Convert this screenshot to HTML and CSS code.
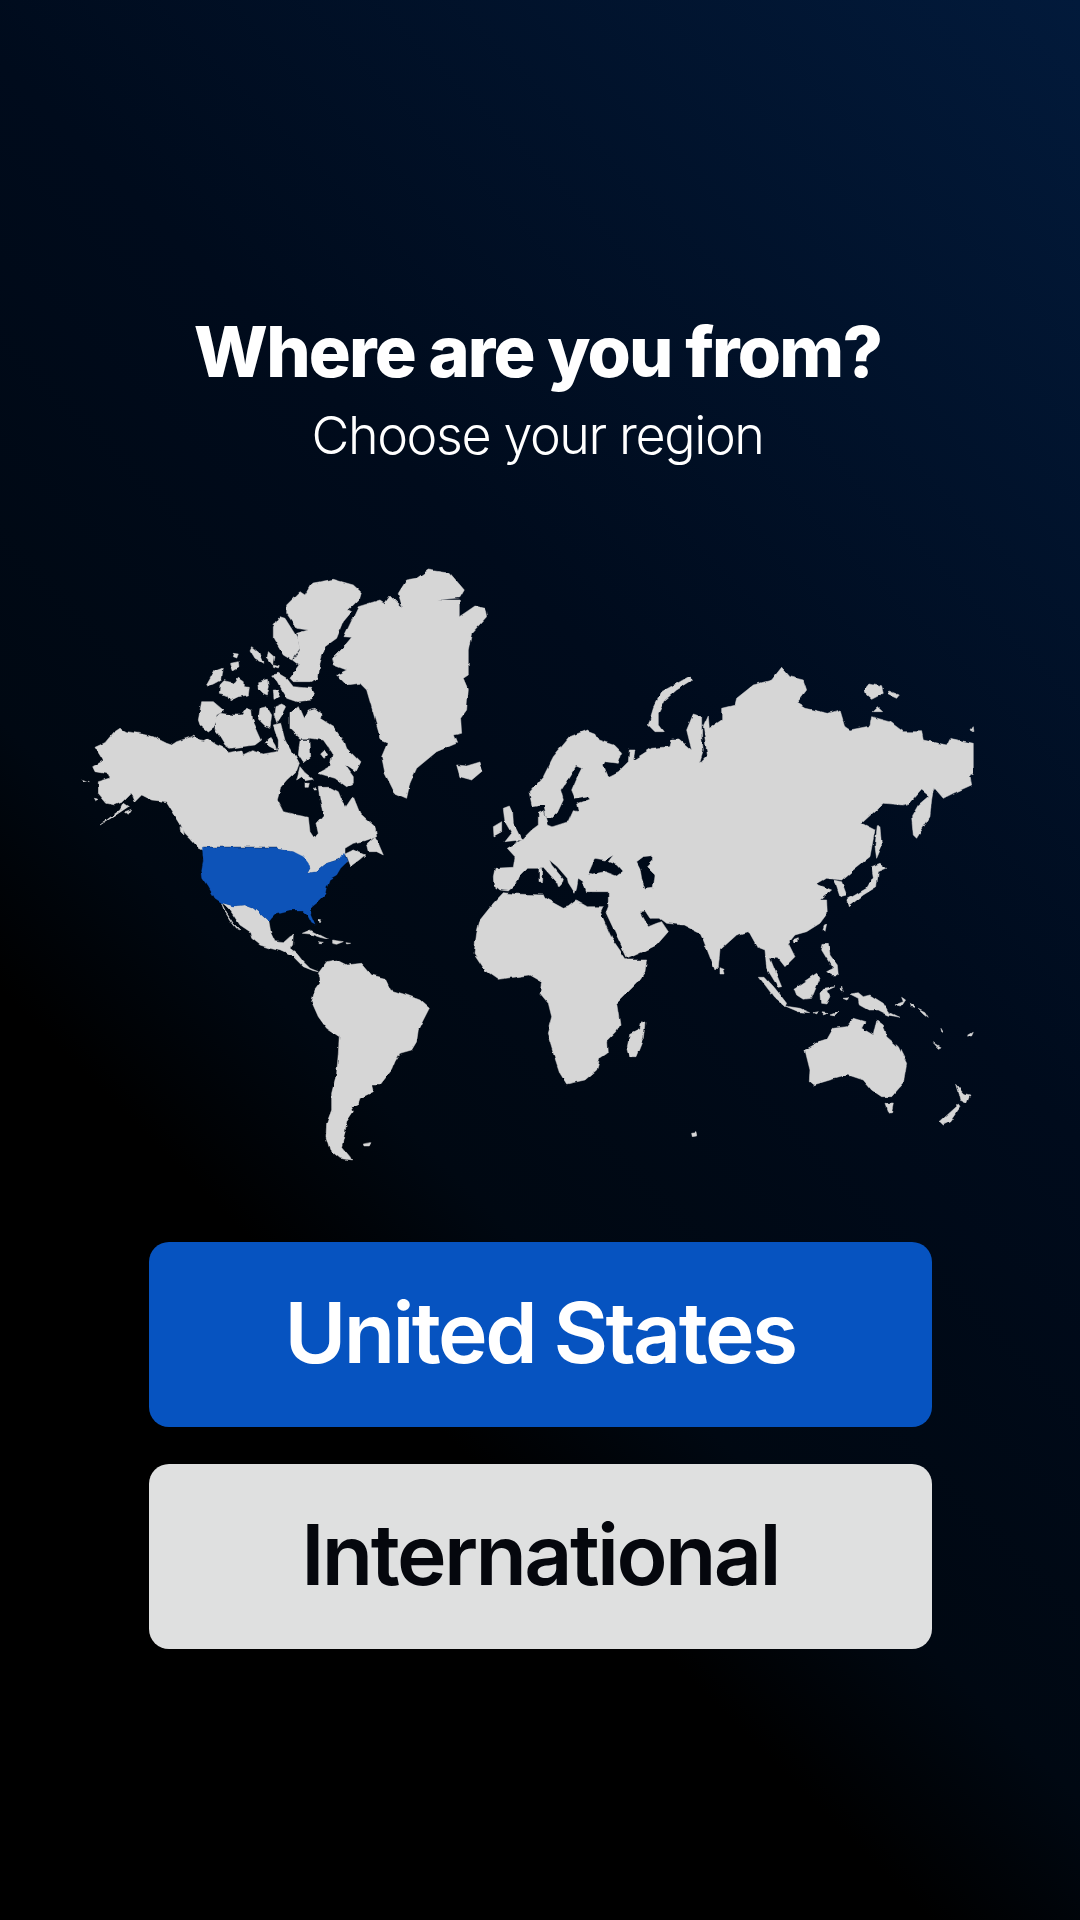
FILE: index.html
```html
<!DOCTYPE html>
<html lang="en">
<head>
    <meta charset="UTF-8">
    <meta name="viewport" content="width=device-width, initial-scale=1.0">
    <title>Where are you from?</title>
    <link rel="stylesheet" href="styles.css">
</head>
<body>
    <div class="screen">
        <div class="heading">
            <h1 class="title">Where are you from?</h1>
            <p class="subtitle">Choose your region</p>
        </div>

        <svg class="map" viewBox="0 550 1080 620" xmlns="http://www.w3.org/2000/svg">
            <defs>
                <!-- roughens the hand traced coastlines a little -->
                <filter id="coast" x="0" y="550" width="1080" height="620" filterUnits="userSpaceOnUse" primitiveUnits="userSpaceOnUse">
                    <feTurbulence type="fractalNoise" baseFrequency="0.11" numOctaves="2" seed="4"/>
                    <feDisplacementMap in="SourceGraphic" scale="3.5" xChannelSelector="R" yChannelSelector="G"/>
                    <feGaussianBlur stdDeviation="0.35"/>
                </filter>
            </defs>
            <g filter="url(#coast)">
            <!-- north america + arctic -->
            <g class="land" transform="translate(70 550) scale(.3333)">
                <polygon points="75,592 105,578 130,548 150,535 170,545 205,550 250,560 290,580 305,585 320,575 365,560 372,555 385,572 400,575 415,568 440,585 470,597 475,608 515,600 520,614 545,602 580,612 620,605 625,592 650,600 675,615 688,640 680,662 650,690 632,712 622,750 640,785 680,795 715,802 720,845 733,865 745,850 738,820 760,795 750,745 745,712 780,712 805,725 815,750 828,770 845,745 850,740 870,790 915,830 920,860 895,870 850,880 825,895 825,912 815,925 770,940 740,965 712,970 720,955 700,925 670,905 625,898 620,890 397,890 410,905 395,890 365,870 345,850 330,820 290,755 245,750 215,735 195,755 185,730 160,755 135,765 110,760 85,730 85,695 120,685 115,672 75,665 68,650 100,632"/>
                <polygon points="160,760 150,780 90,825 130,800 175,770"/>
                <polygon points="36,688 58,695 40,693"/>
                <polygon points="70,742 84,745 75,750"/>
                <polygon points="165,785 185,778 175,793"/>
                <polygon points="365,870 395,885 408,905 385,893"/>
                <polygon points="330,830 340,835 342,855 332,845"/>
                <polygon points="680,690 690,650 705,668 730,688 705,692 695,680"/>
                <polygon points="705,700 718,700 715,712 705,712"/>
                <polygon points="735,712 740,720 730,720"/>
                <polygon points="890,885 915,862 925,880 940,915 920,905 895,905"/>
                <polygon points="825,912 850,900 885,915 870,928 840,950 832,930"/>
                <!-- arctic islands -->
                <polygon points="650,165 690,125 705,135 725,100 790,88 850,105 872,125 865,150 835,180 845,185 820,215 800,265 765,290 750,340 745,385 720,395 670,395 660,385 690,345 670,330 690,300 680,250 715,240 680,235 650,190"/>
                <polygon points="610,230 630,200 645,205 680,260 690,295 665,330 640,315 625,290 610,265"/>
                <polygon points="545,290 570,310 582,340 555,325 540,300"/>
                <polygon points="595,305 612,320 608,345 592,325"/>
                <polygon points="610,345 628,350 625,357 610,352"/>
                <polygon points="490,310 505,312 500,325 487,320"/>
                <polygon points="482,340 505,335 507,350 490,360"/>
                <polygon points="410,405 435,360 457,352 452,390 430,402 415,408"/>
                <polygon points="450,405 462,392 495,400 505,385 520,395 520,410 538,412 535,435 505,440 480,452 470,435 448,430"/>
                <polygon points="563,395 595,388 598,410 592,435 580,430 565,415"/>
                <polygon points="610,420 622,420 632,440 612,448"/>
                <polygon points="605,375 625,370 650,385 670,410 725,415 735,435 725,450 680,455 650,445 635,420 622,395"/>
                <polygon points="395,455 430,455 462,482 440,495 430,530 412,543 390,525 385,510"/>
                <polygon points="435,505 450,490 490,495 515,495 530,475 545,480 548,510 575,570 555,585 515,590 480,595 465,585 450,560 435,540"/>
                <polygon points="570,475 590,470 605,495 600,535 585,530 565,510"/>
                <polygon points="615,470 635,462 650,470 640,490 620,520 612,495"/>
                <polygon points="625,615 625,570 610,525 632,520 645,570 670,615"/>
                <polygon points="585,580 600,562 615,585 620,600 600,590"/>
                <polygon points="660,490 685,470 700,505 715,480 735,475 760,495 750,505 790,530 825,580 830,595 870,635 855,665 825,645 850,680 850,700 830,710 795,685 745,670 780,650 788,610 760,570 725,565 690,565 660,535"/>
                <polygon points="690,570 720,570 722,620 700,638 685,615"/>
                <polygon points="752,612 765,600 773,615 762,625"/>
                <!-- greenland, iceland -->
                <polygon points="785,325 830,280 845,262 822,260 865,170 930,150 945,160 960,138 998,175 985,130 1010,90 1040,85 1075,60 1140,70 1183,120 1170,143 1103,150 1168,150 1168,200 1215,168 1245,175 1250,200 1205,250 1195,300 1195,375 1180,385 1195,420 1190,480 1172,505 1175,550 1150,555 1160,580 1100,605 1040,655 1020,700 1010,745 975,730 945,670 935,620 952,580 930,570 925,540 890,420 870,400 830,405 800,375 830,360 790,345"/>
                <polygon points="1160,645 1190,648 1230,636 1238,662 1205,690 1170,680"/>
            </g>

            <!-- mexico, caribbean, south america -->
            <g class="land" transform="translate(70 820) scale(.3333)">
                <polygon points="455,248 490,258 525,255 550,265 575,285 597,305 603,340 615,365 640,368 660,350 670,345 668,375 660,385 680,400 700,425 720,445 745,455 730,452 700,440 670,410 630,392 600,385 570,375 545,355 540,335 510,315 480,270 465,255"/>
                <polygon points="455,250 470,280 490,310 510,330 500,325 480,300 462,270"/>
                <polygon points="697,340 720,330 750,345 775,358 750,352 720,342"/>
                <polygon points="785,360 820,365 800,373 785,370"/>
                <polygon points="745,368 760,370 750,372"/>
                <polygon points="828,368 842,370 830,372"/>
                <polygon points="745,300 755,302 750,312"/>
                <polygon points="745,460 770,425 800,420 830,435 875,430 905,465 945,475 962,510 1010,525 1050,540 1078,565 1060,600 1045,630 1040,665 1025,690 990,700 975,725 965,750 930,795 905,795 910,815 870,835 865,850 845,860 850,875 830,905 825,935 815,980 840,1010 845,1020 810,1015 780,990 768,950 770,910 785,870 785,820 800,760 805,700 808,650 770,625 745,590 725,545 735,510 750,490 750,470"/>
                <polygon points="880,972 903,968 898,978 882,978"/>
            </g>

            <!-- eurasia -->
            <g class="land" transform="translate(470 650) scale(.3333)">
                <path fill-rule="evenodd" d="M75,655 130,652 135,620 112,595 155,570 185,540 205,525 205,490 222,482 235,525 248,530 295,515 310,482 325,485 320,462 360,448 352,438 315,445 305,420 320,385 335,355 318,348 295,385 272,420 280,450 262,488 245,505 230,505 222,465 190,470 180,425 220,380 250,320 300,260 350,240 375,250 385,270 430,285 455,310 445,340 405,335 400,345 415,380 445,365 475,335 478,300 495,300 490,330 545,295 600,290 605,270 630,270 665,300 650,240 670,192 695,200 695,260 700,300 688,340 712,315 700,230 715,198 718,235 755,210 755,175 795,165 800,145 850,105 905,90 935,52 960,80 1000,90 1010,120 980,160 1005,175 1075,190 1110,180 1125,230 1140,240 1200,228 1205,200 1260,215 1300,245 1355,245 1360,270 1430,285 1440,265 1510,280 1510,370 1500,375 1505,405 1450,430 1420,445 1390,410 1380,440 1355,420 1320,460 1300,465 1240,460 1175,520 1215,540 1200,620 1150,660 1115,690 1070,685 1040,702 1085,720 1050,750 1070,750 1072,790 1050,820 1010,845 975,855 955,880 975,920 945,950 925,925 900,925 935,1010 925,1012 890,955 885,900 860,890 835,845 800,855 750,900 745,950 735,960 700,870 690,850 670,840 640,825 590,820 570,805 540,805 525,782 510,785 535,830 560,820 575,815 595,845 560,885 530,900 475,925 470,920 408,788 415,770 415,725 350,725 340,695 325,685 320,715 315,730 295,698 292,685 262,650 238,630 245,645 280,688 278,695 265,710 262,698 220,652 205,655 170,655 145,680 135,705 115,723 90,720 72,705 70,680Z M355,670 375,625 405,630 430,615 415,635 440,645 458,665 440,678 405,665 370,672Z M500,635 520,620 548,617 547,632 530,650 555,675 550,715 525,718 515,685 510,655Z"/>
                <polygon points="535,225 550,175 575,125 630,95 660,78 665,92 620,120 585,150 565,190 565,225 580,245 555,245"/>
                <polygon points="1185,120 1200,102 1235,110 1240,130 1205,148 1190,135"/>
                <polygon points="1255,122 1288,135 1280,145 1258,135"/>
                <polygon points="1207,185 1222,170 1238,185"/>
                <polygon points="1503,240 1510,230 1512,245"/>
                <polygon points="1325,500 1345,465 1380,435 1392,408 1385,450 1380,500 1340,565 1330,555"/>
                <polygon points="1222,530 1230,530 1235,590 1220,625 1215,590"/>
                <polygon points="1205,650 1230,640 1250,655 1225,665 1220,710 1180,735 1135,770 1130,750 1190,715 1210,680"/>
                <polygon points="1090,690 1115,695 1130,735 1110,740 1100,710"/>
                <polygon points="100,475 118,468 128,490 130,520 155,570 105,575 125,550 105,515"/>
                <polygon points="70,530 95,515 95,545 72,558"/>
                <polygon points="207,655 215,655 215,695 207,695"/>
            </g>

            <!-- africa, asia islands, australia -->
            <g class="land" transform="translate(470 900) scale(.3333)">
                <polygon points="12,160 20,100 30,60 70,10 100,-22 135,-18 220,-15 225,-5 280,25 295,20 320,0 355,20 400,20 392,38 425,115 470,180 530,180 525,215 500,250 440,310 450,375 440,395 410,425 412,460 390,475 380,510 345,540 290,552 270,520 250,460 232,400 245,350 235,310 210,280 215,245 180,225 85,238 45,210"/>
                <polygon points="515,365 525,370 520,415 498,470 480,470 472,440 480,400 510,385"/>
                <polygon points="750,200 762,205 765,222 750,222"/>
                <polygon points="1005,450 1040,430 1070,420 1090,385 1130,380 1150,355 1185,365 1175,385 1210,405 1220,360 1240,375 1250,410 1285,440 1310,490 1300,550 1265,590 1235,590 1205,570 1180,540 1135,525 1080,540 1030,555 1018,545 1020,510"/>
                <polygon points="1245,613 1270,612 1265,638 1255,640"/>
                <polygon points="1457,553 1480,580 1500,585 1490,610 1470,600 1465,580"/>
                <polygon points="1465,615 1470,622 1440,665 1420,675 1410,665"/>
                <polygon points="1140,282 1165,278 1180,290 1200,285 1240,310 1255,335 1290,352 1255,345 1225,330 1195,330 1168,315 1165,295"/>
                <polygon points="972,265 1040,220 1050,235 1025,295 1000,298 980,285"/>
                <polygon points="1050,280 1060,265 1095,260 1070,272 1080,290 1068,312 1052,310"/>
                <polygon points="868,232 885,232 915,265 950,310 945,320 915,295"/>
                <polygon points="945,318 990,325 1022,338 985,335"/>
                <polygon points="1055,150 1060,130 1075,130 1080,165 1102,195 1105,225 1085,225 1070,215 1090,205 1070,175"/>
                <polygon points="1032,338 1045,335 1040,342"/>
                <polygon points="1060,335 1078,338 1060,345"/>
                <polygon points="1083,345 1108,335 1095,348"/>
                <polygon points="1118,295 1140,293 1130,300"/>
                <polygon points="1115,258 1120,275 1113,275"/>
                <polygon points="1275,315 1300,305 1295,292 1307,300 1295,318"/>
                <polygon points="1318,310 1335,322 1320,320"/>
                <polygon points="1345,325 1365,335 1375,352 1360,340"/>
                <polygon points="1410,385 1418,398 1412,395"/>
                <polygon points="1492,408 1510,397 1505,408"/>
                <polygon points="1390,428 1412,442 1405,445"/>
                <polygon points="1063,75 1070,72 1065,95 1058,90"/>
                <polygon points="972,118 985,113 985,125 975,130"/>
                <polygon points="665,700 678,698 680,708 667,710"/>
            </g>

            <!-- contiguous us -->
            <g class="usa" transform="translate(70 820) scale(.3333)">
                <polygon points="397,82 620,82 625,88 670,95 700,110 715,130 720,145 712,160 740,155 770,130 810,118 822,100 832,125 812,145 800,165 778,178 770,200 765,225 745,245 725,262 722,285 735,315 725,310 712,285 695,270 660,270 620,280 605,295 597,305 575,285 550,265 525,255 490,258 455,248 435,235 415,200 398,175 395,150 400,120"/>
            </g>
            </g>
        </svg>

        <div class="choices">
            <button class="choice choice-us">United States</button>
            <button class="choice choice-intl">International</button>
        </div>
    </div>
</body>
</html>
```

FILE: styles.css
```css
* { box-sizing: border-box; }
html, body { margin: 0; padding: 0; }
body { font-family: Inter, "Open Sans", sans-serif; }

.screen {
    width: 1080px;
    height: 1920px;
    padding-top: 312px;
    display: flex;
    flex-direction: column;
    align-items: center;
    color: #fff;
    background: linear-gradient(45deg, #000 31%, #000812 40%, #000b1c 62%, #021a3b 100%);
}

.heading { display: flex; flex-direction: column; align-items: center; padding-right: 5px; }
.title { margin: 0; font-size: 70px; line-height: 80px; font-weight: 800; letter-spacing: -1.8px; }
.subtitle { margin: 13px 0 0; font-size: 52px; line-height: 62px; font-weight: 300; letter-spacing: -1.4px; }

.map { display: block; width: 1080px; height: 620px; margin-top: 83px; flex: none; }
.land { fill: #d6d6d6; stroke: #d6d6d6; stroke-width: 1.5; stroke-linejoin: round; }
.usa { fill: #0b52b8; stroke: #0b52b8; stroke-width: 1; }

.choices { display: flex; flex-direction: column; gap: 37px; margin-top: 72px; }
.choice {
    width: 783px;
    height: 185px;
    padding: 0 0 4px;
    border: none;
    border-radius: 20px;
    font-family: inherit;
    font-size: 84px;
    font-weight: 600;
    letter-spacing: -2.6px;
}
.choice-us { background-color: #0653c0; color: #fff; }
.choice-intl { background-color: #dfe0e0; color: #05070d; }
```
